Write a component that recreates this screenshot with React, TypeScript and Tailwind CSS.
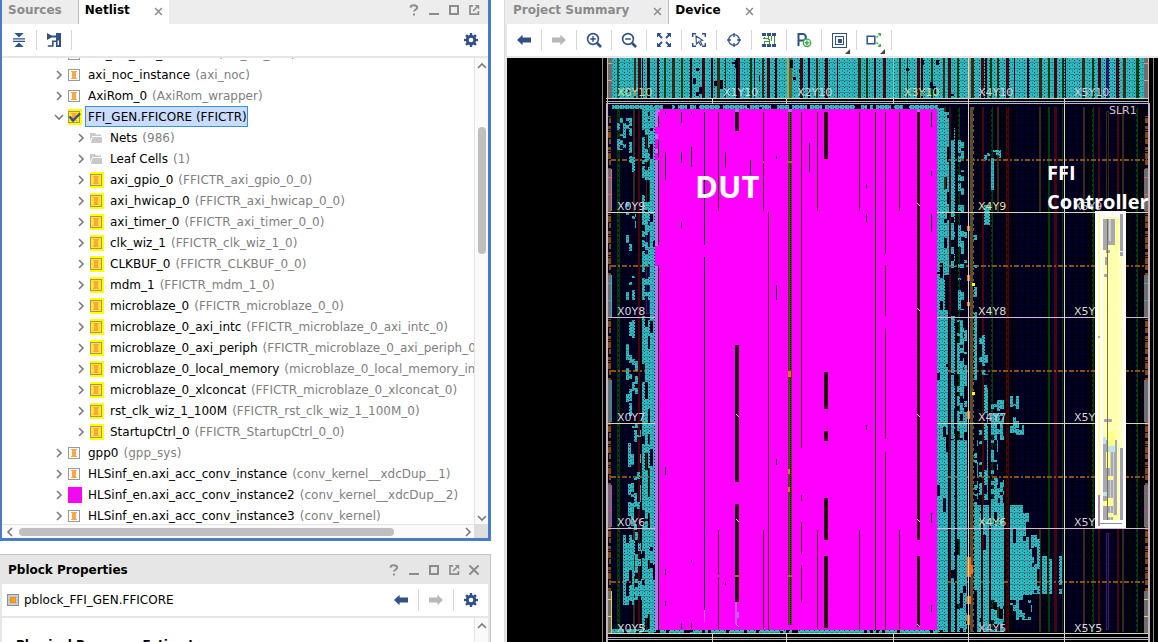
import type { ReactNode } from "react";

/* ---------- icons ---------- */

function HelpIcon() {
  return (
    <svg width="12" height="12" viewBox="0 0 12 12" fill="none" stroke="currentColor" strokeWidth="2">
      <path d="M2.5 3.6C2.6 1.8 4 1.2 5.8 1.2S9.2 2 9.2 3.7 6 5.6 6 7.6M6 9.4v2" />
    </svg>
  );
}
function MinimizeIcon() {
  return (
    <svg width="12" height="12" viewBox="0 0 12 12" shapeRendering="crispEdges">
      <path d="M1 9h10v2H1z" fill="currentColor" />
    </svg>
  );
}
function MaximizeIcon() {
  return (
    <svg width="12" height="12" viewBox="0 0 12 12" fill="none" stroke="currentColor" strokeWidth="2" shapeRendering="crispEdges">
      <path d="M2 2h8v8H2z" />
    </svg>
  );
}
function PopoutIcon() {
  return (
    <svg width="12" height="12" viewBox="0 0 12 12" fill="none" stroke="currentColor">
      <path d="M5 1.8H2v8.4h8.4V7" strokeWidth="1.7" />
      <path d="M5 7l4-4" strokeWidth="1.6" />
      <path d="M6.8 1h4.4v4.4z" fill="currentColor" stroke="none" />
    </svg>
  );
}
function CloseIcon({ size = 10 }: { size?: number }) {
  return (
    <svg width={size} height={size} viewBox="0 0 10 10" fill="none" stroke="currentColor" strokeWidth="1.7">
      <path d="M1.2 1.2l7.6 7.6M8.8 1.2L1.2 8.8" />
    </svg>
  );
}
function GearIcon() {
  return (
    <svg width="14" height="14" viewBox="0 0 14 14">
      <g fill="#2f5088">
        <path d="M5.8 0h2.4v14H5.8z" />
        <path d="M0 5.8h14v2.4H0z" />
        <path d="M5.8 0h2.4v14H5.8z" transform="rotate(45 7 7)" />
        <path d="M5.8 0h2.4v14H5.8z" transform="rotate(-45 7 7)" />
        <circle cx="7" cy="7" r="5.2" />
      </g>
      <circle cx="7" cy="7" r="2.3" fill="#fff" />
    </svg>
  );
}
function ArrowIcon({ right = false }: { right?: boolean }) {
  return (
    <svg width="14" height="12" viewBox="0 0 14 12" fill={right ? "#b8b8b8" : "#2f5088"}>
      <path d={right ? "M14 6L8.4.8V3.6H0v4.8h8.4v2.8z" : "M0 6L5.6.8V3.6H14v4.8H5.6v2.8z"} />
    </svg>
  );
}
function CollapseIcon() {
  return (
    <svg width="12" height="14" viewBox="0 0 12 14" fill="#2f5088">
      <path d="M1.4 0h9.2L6 4.4zM0 5.2h12v1.3H0zM0 7.8h12v1.3H0zM1.4 14h9.2L6 9.6z" />
    </svg>
  );
}
function HierarchyIcon() {
  return (
    <svg width="14" height="14" viewBox="0 0 14 14" fill="#2f5088">
      <path d="M0 0l4.5 2.5H9V0h5v14H9V9H6.6v4.8H.8v-1.6H5V7.4h4V4.6H4.5L0 7z" />
      <path d="M10.6 7.4h1.4v4.6h-1.4z" fill="#fff" />
    </svg>
  );
}
function ZoomIcon({ plus = false }: { plus?: boolean }) {
  return (
    <svg width="16" height="16" viewBox="0 0 16 16" fill="none" stroke="#2f5088">
      <circle cx="7" cy="7" r="5.4" strokeWidth="1.6" />
      <path d="M11 11l4 4" strokeWidth="2.6" />
      <path d={plus ? "M4.2 7h5.6M7 4.2v5.6" : "M4.2 7h5.6"} strokeWidth="1.5" />
    </svg>
  );
}
function FitIcon() {
  return (
    <svg width="14" height="14" viewBox="0 0 14 14" fill="#2f5088" stroke="#2f5088">
      <path stroke="none" d="M0 0h4.6L0 4.6zM14 0v4.6L9.4 0zM0 14V9.4L4.6 14zM14 14H9.4L14 9.4z" />
      <path d="M1 1l4 4M13 1L9 5M1 13l4-4M13 13L9 9" strokeWidth="1.8" />
    </svg>
  );
}
function SelectAreaIcon() {
  return (
    <svg width="14" height="14" viewBox="0 0 14 14" fill="none" stroke="#2f5088" strokeWidth="1.4">
      <path d="M.7 4V.7H4M10 .7h3.3V4M.7 10v3.3H4M10 13.3h3.3V10" />
      <path d="M4 3l6.6 4.4-2.6.7 2 3.4-1.4.8-2-3.4L4.4 11z" strokeWidth="1.1" />
    </svg>
  );
}
function TargetIcon() {
  return (
    <svg width="14" height="14" viewBox="0 0 14 14" fill="none" stroke="#2f5088" strokeWidth="1.3">
      <circle cx="7" cy="7" r="5.4" />
      <path d="M7 0v4M7 10v4M0 7h4M10 7h4" />
    </svg>
  );
}
function RouteIcon() {
  return (
    <svg width="14" height="14" viewBox="0 0 14 14" shapeRendering="crispEdges">
      <path fill="#2f5088" d="M0 0h4v3H0zM5 0h4v3H5zM10 0h4v3h-4zM0 11h4v3H0zM5 11h4v3H5zM10 11h4v3h-4z" />
      <path fill="#3a9a3f" d="M6 3h1v4H6zM2 4h1v1H2zM1 5h5v1H1zM2 8h5v1H2zM7 6h1v6H7zM2 8h1v3H2zM9 3h1v5H9zM12 3h1v8h-1z" />
    </svg>
  );
}
function PblockAddIcon() {
  return (
    <svg width="16" height="16" viewBox="0 0 16 16" fill="none">
      <path d="M2.5 14V2h4.2a3 3 0 010 6.4H2.5" stroke="#2f5088" strokeWidth="2" />
      <circle cx="11" cy="10.8" r="3.7" fill="#fff" stroke="#3fae49" strokeWidth="1.3" />
      <path d="M8.6 10.8h4.8M11 8.4v4.8" stroke="#3fae49" strokeWidth="1.5" />
    </svg>
  );
}
function LayersIcon() {
  return (
    <svg width="15" height="15" viewBox="0 0 15 15" fill="none" stroke="#2f5088" shapeRendering="crispEdges">
      <path d="M.5.5h14v14H.5zM3.5 3.5h8v8h-8z" />
      <path d="M6 6h4v4H6z" fill="#2f5088" stroke="none" />
    </svg>
  );
}
function ExpandIcon() {
  return (
    <svg width="16" height="16" viewBox="0 0 16 16" fill="none">
      <path d="M1.2 4.2h7.6v7.6H1.2z" stroke="#2f5088" strokeWidth="1.5" />
      <path d="M10.5 5.5l3-3M10.5 10.5l3 3" stroke="#3fae49" strokeWidth="1.5" strokeDasharray="2 1" />
      <path d="M11.5 1H15v3.5zM11.5 15H15v-3.5z" fill="#3fae49" />
    </svg>
  );
}
function Chevron({ dir }: { dir: "up" | "down" | "left" | "right" }) {
  const d = {
    up: "M1 7l4-4 4 4",
    down: "M1 3l4 4 4-4",
    left: "M7 1L3 5l4 4",
    right: "M3 1l4 4-4 4",
  }[dir];
  return (
    <svg width="10" height="10" viewBox="0 0 10 10" fill="none" stroke="#7a7a7a" strokeWidth="1.6">
      <path d={d} />
    </svg>
  );
}

type NodeKind = "cell" | "marked" | "checked" | "folder" | "magenta";

function NodeIcon({ kind }: { kind: NodeKind }) {
  if (kind === "folder") {
    return (
      <svg width="14" height="16" viewBox="0 0 14 16">
        <path d="M0 3h5l1 1.5h5V6H2.5L0 11z" fill="#c9c9c9" />
        <path d="M2.6 7H12v6H1z" fill="#c9c9c9" />
      </svg>
    );
  }
  if (kind === "magenta") {
    return (
      <svg width="14" height="16" viewBox="0 0 14 16">
        <path d="M0 0h14v16H0z" fill="#f0f" />
        <path d="M6.5 2.5L12 8l-5.5 5.5L1 8z" fill="none" stroke="#a03ca8" />
      </svg>
    );
  }
  return (
    <svg width="14" height="16" viewBox="0 0 14 16">
      {kind !== "cell" && <path d="M0 0h14v16H0z" fill="#ff0" />}
      <path
        d="M.5 2.5h11v11H.5z"
        fill={kind === "cell" ? "#fff" : "#ffe52a"}
        stroke={kind === "cell" ? "#9a9a9a" : "#a39c50"}
        shapeRendering="crispEdges"
      />
      <path d="M3 4h6v1h-1v6h1v1H3v-1h1V5H3z" fill="#ffa640" shapeRendering="crispEdges" />
      {kind === "checked" && <path d="M1.5 7.5l3.5 4 7-7" fill="none" stroke="#2f5088" strokeWidth="2.4" />}
    </svg>
  );
}

/* ---------- shared controls ---------- */

function ToolButton({ label, menu = false, children }: { label: string; menu?: boolean; children: ReactNode }) {
  return (
    <button
      type="button"
      aria-label={label}
      className="relative flex h-5 w-[35px] shrink-0 items-center justify-center border-r border-[#d6d6d6]"
    >
      {children}
      {menu && (
        <svg className="absolute right-1.5 -bottom-1" width="5" height="5" viewBox="0 0 5 5">
          <path d="M5 0v5H0z" fill="#444" />
        </svg>
      )}
    </button>
  );
}

function WindowButton({ label, children }: { label: string; children: ReactNode }) {
  return (
    <button type="button" aria-label={label} className="flex h-5 w-5 items-center justify-center text-[#8c8c8c]">
      {children}
    </button>
  );
}

function WindowControls({ closable = false }: { closable?: boolean }) {
  return (
    <div className="ml-auto flex items-center pr-1">
      <WindowButton label="Help"><HelpIcon /></WindowButton>
      <WindowButton label="Minimize"><MinimizeIcon /></WindowButton>
      <WindowButton label="Maximize"><MaximizeIcon /></WindowButton>
      <WindowButton label="Float"><PopoutIcon /></WindowButton>
      {closable && <WindowButton label="Close"><CloseIcon size={12} /></WindowButton>}
    </div>
  );
}

function Tab({ title, active = false, closable = true }: { title: string; active?: boolean; closable?: boolean }) {
  return (
    <div className={`flex items-center pb-1 ${active ? "bg-white" : "border-r border-[#bdbdbd]"}`}>
      <button type="button" className={`pl-1.5 whitespace-nowrap ${active ? "text-black" : "text-[#8a8a8a]"} ${closable ? "pr-6" : "pr-4"}`}>
        {title}
      </button>
      {closable && (
        <button type="button" aria-label={`Close ${title}`} className="pt-0.5 pr-1.5 text-[#8c8c8c]">
          <CloseIcon size={9} />
        </button>
      )}
    </div>
  );
}

/* ---------- netlist ---------- */

type Row = { name: string; ref?: string; kind: NodeKind; level: 1 | 2; open?: boolean };

const rows: Row[] = [
  { name: "axi_clk_con_instance", ref: "axi_clk_con", kind: "cell", level: 1 },
  { name: "axi_noc_instance", ref: "axi_noc", kind: "cell", level: 1 },
  { name: "AxiRom_0", ref: "AxiRom_wrapper", kind: "cell", level: 1 },
  { name: "FFI_GEN.FFICORE (FFICTR)", kind: "checked", level: 1, open: true },
  { name: "Nets", ref: "986", kind: "folder", level: 2 },
  { name: "Leaf Cells", ref: "1", kind: "folder", level: 2 },
  { name: "axi_gpio_0", ref: "FFICTR_axi_gpio_0_0", kind: "marked", level: 2 },
  { name: "axi_hwicap_0", ref: "FFICTR_axi_hwicap_0_0", kind: "marked", level: 2 },
  { name: "axi_timer_0", ref: "FFICTR_axi_timer_0_0", kind: "marked", level: 2 },
  { name: "clk_wiz_1", ref: "FFICTR_clk_wiz_1_0", kind: "marked", level: 2 },
  { name: "CLKBUF_0", ref: "FFICTR_CLKBUF_0_0", kind: "marked", level: 2 },
  { name: "mdm_1", ref: "FFICTR_mdm_1_0", kind: "marked", level: 2 },
  { name: "microblaze_0", ref: "FFICTR_microblaze_0_0", kind: "marked", level: 2 },
  { name: "microblaze_0_axi_intc", ref: "FFICTR_microblaze_0_axi_intc_0", kind: "marked", level: 2 },
  { name: "microblaze_0_axi_periph", ref: "FFICTR_microblaze_0_axi_periph_0", kind: "marked", level: 2 },
  { name: "microblaze_0_local_memory", ref: "microblaze_0_local_memory_imp", kind: "marked", level: 2 },
  { name: "microblaze_0_xlconcat", ref: "FFICTR_microblaze_0_xlconcat_0", kind: "marked", level: 2 },
  { name: "rst_clk_wiz_1_100M", ref: "FFICTR_rst_clk_wiz_1_100M_0", kind: "marked", level: 2 },
  { name: "StartupCtrl_0", ref: "FFICTR_StartupCtrl_0_0", kind: "marked", level: 2 },
  { name: "gpp0", ref: "gpp_sys", kind: "cell", level: 1 },
  { name: "HLSinf_en.axi_acc_conv_instance", ref: "conv_kernel__xdcDup__1", kind: "cell", level: 1 },
  { name: "HLSinf_en.axi_acc_conv_instance2", ref: "conv_kernel__xdcDup__2", kind: "magenta", level: 1 },
  { name: "HLSinf_en.axi_acc_conv_instance3", ref: "conv_kernel", kind: "cell", level: 1 },
];

function TreeRow({ row }: { row: Row }) {
  return (
    <li
      role="treeitem"
      aria-expanded={!!row.open}
      className={`flex h-[21px] items-center whitespace-nowrap ${row.level === 1 ? "pl-[52px]" : "pl-[74px]"}`}
    >
      <button type="button" aria-label={`Toggle ${row.name}`} className="mr-1 w-2.5 shrink-0">
        <Chevron dir={row.open ? "down" : "right"} />
      </button>
      <span className="shrink-0"><NodeIcon kind={row.kind} /></span>
      <span
        className={`ml-[3px] flex h-[21px] items-center border pl-0.5 ${
          row.open ? "border-[#3a93d0] bg-[#c9dcfd]" : "border-transparent"
        }`}
      >
        <span className="text-black">{row.name}</span>
        {row.ref && <span className="ml-[5px] text-[#808080]">({row.ref})</span>}
      </span>
    </li>
  );
}

function NetlistPanel() {
  return (
    <section className="flex min-h-0 flex-1 flex-col border-r-[3px] border-b-[3px] border-l-2 border-[#4a7bcb] bg-white">
      <header className="flex h-6 shrink-0 items-stretch bg-[#ededed] font-bold">
        <Tab title="Sources" closable={false} />
        <Tab title="Netlist" active />
        <div className="ml-auto flex pb-1">
          <WindowControls />
        </div>
      </header>
      <div className="flex h-[34px] shrink-0 items-center border-b-2 border-[#e6e6e6]">
        <ToolButton label="Collapse all"><CollapseIcon /></ToolButton>
        <ToolButton label="Show hierarchy"><HierarchyIcon /></ToolButton>
        <button type="button" aria-label="Settings" className="mr-2.5 ml-auto"><GearIcon /></button>
      </div>
      <div className="flex min-h-0 flex-1">
        <div className="min-w-0 flex-1 overflow-hidden">
          <ul role="tree" className="-mt-[15px]">
            {rows.map((row) => <TreeRow key={row.name} row={row} />)}
          </ul>
        </div>
        <div className="flex w-3.5 shrink-0 flex-col items-center border-l border-[#e4e4e4] bg-[#fafafa]">
          <button type="button" aria-label="Scroll up" className="flex h-4 items-center"><Chevron dir="up" /></button>
          <div className="flex w-2 flex-1 flex-col pt-[53px]">
            <div className="h-[127px] rounded-full bg-[#bfbfbf]" />
          </div>
          <button type="button" aria-label="Scroll down" className="flex h-3 items-center"><Chevron dir="down" /></button>
        </div>
      </div>
      <div className="flex h-3.5 shrink-0 bg-[#fafafa]">
        <div className="flex min-w-0 flex-1 items-center border-t border-[#e4e4e4]">
          <button type="button" aria-label="Scroll left" className="w-[17px] pl-[3px]"><Chevron dir="left" /></button>
          <div className="min-w-0 flex-1">
            <div className="h-2 w-[85%] rounded-full bg-[#bfbfbf]" />
          </div>
          <button type="button" aria-label="Scroll right" className="w-3.5 pl-[3px]"><Chevron dir="right" /></button>
        </div>
        <div className="w-3.5 bg-[#dedede]" />
      </div>
    </section>
  );
}

function PropertiesPanel() {
  return (
    <section className="flex h-[88px] shrink-0 flex-col overflow-hidden border-t border-r border-[#c4c4c4] bg-white">
      <header className="flex h-[29px] shrink-0 items-center bg-[#e6e6e6] pr-0.5 pl-2 font-bold">
        <h2>Pblock Properties</h2>
        <WindowControls closable />
      </header>
      <div className="flex h-[58px] flex-col border-x-2 border-[#e6e6e6]">
        <div className="flex h-[34px] shrink-0 items-center border-b-2 border-[#e6e6e6]">
          <svg className="ml-[5px]" width="12" height="12" viewBox="0 0 12 12" shapeRendering="crispEdges">
            <path d="M.5.5h11v11H.5z" fill="#b9cfdf" stroke="#8e8e8e" />
            <path d="M3 3h6v6H3z" fill="#ff8a00" />
            <path d="M4 4h4v4H4z" fill="#ffa51e" />
          </svg>
          <span className="ml-[5px]">pblock_FFI_GEN.FFICORE</span>
          <div className="ml-auto flex items-center">
            <ToolButton label="Back"><ArrowIcon /></ToolButton>
            <ToolButton label="Forward"><ArrowIcon right /></ToolButton>
            <button type="button" aria-label="Settings" className="mr-2.5 ml-2.5"><GearIcon /></button>
          </div>
        </div>
        <div className="flex min-h-0 flex-1">
          <h3 className="flex-1 pt-[18px] pl-3.5 font-bold">Physical Resource Estimates</h3>
          <div className="flex w-3.5 flex-col items-center border-l border-[#e4e4e4] bg-[#fafafa]">
            <button type="button" aria-label="Scroll properties up" className="flex h-4 items-center"><Chevron dir="up" /></button>
          </div>
        </div>
      </div>
    </section>
  );
}

/* ---------- device floorplan ---------- */

let seed = 20;
function rnd() {
  seed = (seed * 1103515245 + 12345) % 2147483648;
  return seed / 2147483648;
}

type Zone = [x0: number, x1: number, y0: number, y1: number, density: number];

// Short vertical runs of placed logic, column by column.
function fillZones(zones: Zone[], step = 3) {
  let d = "";
  for (const [x0, x1, y0, y1, density] of zones) {
    for (let x = x0; x < x1; x += step) {
      let y = y0;
      while (y < y1) {
        const run = 2 + Math.floor(rnd() * (density > 0.7 ? 16 : 7));
        if (rnd() < density) d += `M${x} ${y}h${Math.min(step, x1 - x)}v${Math.min(run, y1 - y)}h-${Math.min(step, x1 - x)}z`;
        y += run;
      }
    }
  }
  return d;
}

const logic = fillZones([
  [612, 938, 105, 109, 0.85],
  [650, 656, 105, 632, 0.9],
  [642, 650, 105, 180, 0.6], [642, 650, 195, 300, 0.6], [642, 650, 316, 632, 0.75],
  [617, 632, 118, 150, 0.55], [626, 636, 150, 300, 0.14], [626, 638, 320, 430, 0.25],
  [628, 641, 430, 530, 0.35], [623, 634, 535, 605, 0.75], [632, 642, 530, 600, 0.45],
  [937, 944, 108, 280, 0.97], [937, 945, 280, 310, 0.75], [937, 948, 310, 632, 0.95],
  [944, 949, 112, 212, 0.85], [944, 949, 212, 275, 0.7],
  [951, 955, 128, 212, 0.8], [951, 955, 212, 268, 0.7], [951, 955, 316, 440, 0.75], [951, 955, 440, 632, 0.93],
  [958, 964, 138, 268, 0.5], [958, 964, 278, 310, 0.2], [957, 964, 320, 440, 0.7], [957, 967, 440, 632, 0.93],
  [964, 967, 230, 265, 0.4], [964, 967, 330, 440, 0.65],
  [984, 1001, 150, 160, 0.4], [991, 994, 158, 190, 0.85], [984, 990, 205, 225, 0.6], [974, 977, 235, 300, 0.25],
  [974, 977, 312, 380, 0.75], [979, 988, 335, 375, 0.25], [984, 988, 385, 440, 0.8],
  [991, 1004, 400, 440, 0.6], [1010, 1019, 396, 433, 0.6], [1016, 1024, 425, 435, 0.6],
  [974, 978, 440, 505, 0.5], [979, 982, 430, 500, 0.5], [984, 988, 423, 500, 0.85],
  [991, 998, 440, 505, 0.4], [991, 1004, 480, 505, 0.5],
  [974, 981, 505, 632, 0.88], [983, 989, 505, 632, 0.93], [991, 1004, 503, 600, 0.93], [991, 1004, 600, 632, 0.6],
  [1010, 1023, 505, 600, 0.93], [1023, 1032, 513, 595, 0.8], [1031, 1040, 535, 594, 0.75],
  [1042, 1047, 556, 594, 0.8], [1049, 1052, 556, 594, 0.7], [1059, 1062, 556, 594, 0.7],
  [1010, 1032, 600, 620, 0.3], [612, 938, 629, 633, 0.75],
]);

const topGaps = fillZones([
  [628, 642, 60, 96, 0.08], [690, 760, 60, 96, 0.07], [790, 800, 60, 80, 0.3], [900, 960, 60, 96, 0.03],
], 3);

const NAVY = "#00001c", RED = "#48040f", BROWN = "#3b2a10", GREEN = "#023c08", BLACK = "#050505";

// Fabric columns in the open rows: x, width, colour.
const fabric: [number, number, string][] = [
  [617, 3, GREEN], [638, 2, RED], [949, 2, RED], [958, 2, GREEN], [982, 2, RED], [991, 2, GREEN],
  [1006, 3, RED], [1048, 2, GREEN], [1054, 3, RED], [1062, 1, GREEN], [1092, 2, GREEN], [1098, 2, RED],
  [1117, 2, RED], [1136, 2, GREEN], [1004, 2, BLACK], [1010, 2, BLACK], [1046, 2, BLACK], [1140, 3, BLACK],
  [956, 1, BLACK], [980, 2, BLACK], [989, 1, BLACK], [1088, 2, BLACK], [1128, 4, BLACK],
];
const outerFabric = [633, 944, 997, 1039, 1083, 1122];

const topColumns: [number, number, string][] = [
  [617, 2, "#0a5b3a"], [634, 2, BROWN], [638, 3, RED], [642, 1, NAVY], [647, 3, BLACK], [657, 2, RED], [664, 2, GREEN],
  [672, 3, BROWN], [681, 2, GREEN], [690, 2, BLACK], [702, 3, RED], [711, 2, NAVY], [717, 3, BROWN], [725, 1, GREEN],
  [736, 4, NAVY], [738, 2, RED], [750, 2, GREEN], [754, 1, NAVY], [762, 2, BROWN], [767, 3, RED], [775, 2, BLACK],
  [787, 2, "#7fb86a"], [789, 3, "#6b5a26"], [800, 3, RED], [808, 2, NAVY], [816, 2, BROWN], [825, 3, RED],
  [837, 1, NAVY], [858, 3, BROWN], [866, 2, GREEN], [874, 2, RED], [883, 3, RED], [893, 1, "#66d8c0"], [899, 2, BROWN],
  [907, 1, GREEN], [917, 3, RED], [921, 2, BLACK], [931, 2, GREEN], [943, 2, BROWN], [948, 3, RED], [957, 2, GREEN],
  [968, 2, "#b09a70"], [971, 3, BROWN], [981, 3, RED], [985, 2, BLACK], [990, 2, GREEN], [997, 2, BROWN], [1006, 3, RED],
  [1014, 1, NAVY], [1027, 2, NAVY], [1039, 3, BROWN], [1048, 2, GREEN], [1054, 3, RED], [1062, 2, GREEN], [1065, 1, NAVY],
  [1082, 3, BROWN], [1092, 2, GREEN], [1098, 3, RED], [1106, 3, "#35106a"], [1116, 3, RED], [1123, 3, BROWN], [1136, 3, GREEN],
];

// Gaps between placed blocks inside the design under test: x, y0, y1, width, colour.
const dutGaps: [number, number, number, number, string][] = [
  [665, 112, 114, 1, GREEN], [665, 152, 180, 1, GREEN], [665, 467, 475, 1, GREEN], [665, 569, 575, 1, GREEN], [665, 601, 606, 1, GREEN],
  [658, 116, 127, 1, BLACK], [658, 140, 158, 1, BLACK], [658, 160, 245, 1, BLACK], [658, 265, 630, 1, BLACK],
  [681, 112, 123, 1, GREEN], [681, 152, 163, 1, GREEN], [681, 222, 228, 1, GREEN], [681, 623, 629, 1, GREEN],
  [691, 112, 114, 1, GREEN], [691, 147, 167, 1, GREEN], [691, 560, 562, 1, GREEN], [691, 623, 629, 1, GREEN],
  [704, 112, 245, 1, NAVY], [704, 257, 610, 1, NAVY],
  [718, 112, 211, 1, BROWN], [718, 530, 629, 1, BROWN], [725, 152, 168, 1, GREEN], [725, 582, 585, 1, BLACK],
  [735, 112, 131, 4, NAVY], [737, 112, 131, 2, RED], [735, 345, 482, 2, NAVY], [737, 345, 482, 2, RED],
  [735, 504, 602, 2, NAVY], [737, 504, 602, 2, RED], [750, 160, 175, 1, GREEN],
  [763, 112, 211, 1, BROWN], [763, 530, 629, 1, BROWN], [768, 212, 630, 1, BROWN],
  [776, 156, 159, 1, GREEN], [776, 285, 300, 1, GREEN], [776, 459, 465, 1, GREEN],
  [788, 112, 370, 4, "#55452a"], [788, 370, 625, 4, "#55452a"],
  [801, 112, 448, 1, BROWN], [801, 495, 501, 1, BROWN], [801, 522, 554, 1, BROWN], [801, 565, 602, 1, BROWN],
  [809, 143, 172, 1, GREEN], [817, 112, 211, 1, BROWN], [817, 530, 629, 1, BROWN],
  [824, 112, 159, 4, "#24060a"], [824, 372, 409, 4, "#24060a"], [824, 431, 441, 4, "#24060a"],
  [824, 498, 540, 4, "#24060a"], [824, 556, 628, 4, "#24060a"],
  [859, 112, 211, 1, BROWN], [859, 530, 629, 1, BROWN], [866, 184, 188, 1, GREEN], [866, 214, 222, 1, GREEN], [866, 425, 430, 1, GREEN],
  [875, 112, 630, 1, BLACK], [885, 112, 254, 1, BROWN], [885, 265, 316, 1, BROWN], [885, 328, 439, 1, BROWN], [885, 452, 630, 1, BROWN],
  [899, 112, 211, 1, BROWN], [899, 530, 629, 1, BROWN],
  [917, 112, 540, 3, "#30040c"], [917, 556, 627, 3, "#30040c"],
  [931, 112, 127, 1, GREEN], [931, 171, 176, 1, GREEN], [931, 214, 232, 1, GREEN], [931, 513, 523, 1, GREEN], [931, 605, 612, 1, GREEN],
];

const rowLines = [212, 317, 423, 528];
const clockLines = [159, 265, 370, 476, 581];
const labels: [number, number, string, string][] = [
  [617, 96, "X0Y10", "#d8dc9a"], [723, 96, "X1Y10", "#c8dcdc"], [797, 96, "X2Y10", "#d0d8dc"],
  [904, 96, "X3Y10", "#d8dc9a"], [978, 96, "X4Y10", "#d8d0d8"], [1074, 96, "X5Y10", "#d8c8dc"],
  [617, 210, "X0Y9", "#dcd0e0"], [617, 315, "X0Y8", "#dcd0e0"], [617, 421, "X0Y7", "#dcd0e0"], [617, 526, "X0Y6", "#dcd0e0"], [617, 632, "X0Y5", "#d8d8d8"],
  [978, 210, "X4Y9", "#dcdcb0"], [978, 315, "X4Y8", "#dcdcc8"], [978, 421, "X4Y7", "#dcc8dc"], [978, 526, "X4Y6", "#dcdcb0"], [978, 632, "X4Y5", "#dcb8dc"],
  [1074, 210, "X5Y9", "#c8c0c8"], [1074, 315, "X5Y8", "#dcdcc8"], [1074, 421, "X5Y7", "#dcd0dc"], [1074, 526, "X5Y6", "#dcc8dc"], [1074, 632, "X5Y5", "#d8d8d8"],
  [1109, 114, "SLR1", "#d0c0d0"],
];

const ioBanks: [number, string][] = [[169, "#e06080"], [275, "#30a8c8"], [380, "#2090a0"], [485, "#c040b0"], [591, "#e8d040"]];

const coreBlocks = fillZones([
  [1103, 1118, 440, 521, 0.16], [1103, 1109, 245, 320, 0.04],
], 5);

function DeviceView() {
  return (
    <svg
      role="img"
      aria-label="Device floorplan"
      viewBox="507 58 651 584"
      preserveAspectRatio="xMinYMin slice"
      shapeRendering="crispEdges"
      className="block h-full w-full bg-black"
    >
      <defs>
        <pattern id="fabric" width="6" height="7" patternUnits="userSpaceOnUse">
          <path d="M0 0h6v7H0z" fill="#00000e" />
          <path d="M0 0h4v6H0z" fill="#00001e" />
          <path d="M0 3h5v1H0zM2 0h1v7H2z" fill="#000034" />
        </pattern>
        <pattern id="logic" width="5" height="6" patternUnits="userSpaceOnUse">
          <path d="M0 0h5v6H0z" fill="#2fb9c0" />
          <path d="M0 2h4v1H0zM2 4h1v2H2z" fill="#1f8c96" />
          <path d="M4 0h1v1H4zM4 3h1v1H4z" fill="#04283c" />
        </pattern>
        <pattern id="io" width="4" height="21" patternUnits="userSpaceOnUse">
          <path d="M0 0h4v3H0zM0 4h4v1H0zM0 6h4v6H0zM1 13h3v5H1z" fill="#824a0c" />
        </pattern>
      </defs>

      <path d="M507 58h651v584H507z" fill="#000" />
      <path d="M602 58h1v584h-1zM1153 58h1v584h-1z" fill="#8c8c8c" />
      <path d="M608 104h540v529H608z" fill="url(#fabric)" />
      <path d="M608 98h540v7H608z" fill={NAVY} />

      {fabric.map(([x, w, c]) => <rect key={x} x={x} y={107} width={w} height={525} fill={c} />)}
      {outerFabric.map((x) => (
        <path key={x} d={`M${x} 107h2v105h-2zM${x} 528h2v104h-2z`} fill={BROWN} />
      ))}
      <path d="M646.5 111v97h3v-97zM646.5 428v96h3v-96zM646.5 533v96h3v-96zM1106.5 111v97h2v-97z" fill="none" stroke={BROWN} />
      <path d="M646.5 217v96h3v-96zM1106.5 533v96h2v-96z" fill="none" stroke="#4a1080" />
      <path d="M618.5 107v525M958.5 107v525M991.5 107v525M1092.5 107v525M1136.5 107v525" stroke="#000" strokeDasharray="2 3" />
      <path d="M1007.5 107v525" stroke="#100" strokeDasharray="3 3" />

      {clockLines.map((y) => (
        <path key={y} d={`M611 ${y}.5H655M937 ${y}.5h210`} stroke="#8a5210" strokeWidth="2" strokeDasharray="5 2 2 2" />
      ))}

      <path d={logic} fill="url(#logic)" />
      <path d="M970 107h3v525h-3z" fill="#5c4c28" />
      <path d="M973.5 107v525" stroke="#8a5a20" strokeDasharray="3 4 2 2" />
      <path d="M967 226h3v5h-3zM967 275h3v6h-3zM967 302h3v4h-3zM967 411h3v8h-3zM967 557h4v20h-4zM970 565h3v9h-3zM967 596h4v8h-4zM967 615h3v10h-3z" fill="#f07010" />
      <path d="M972 283h3v3h-3zM972 392h3v3h-3z" fill="#ff0" />

      {/* row above the die boundary */}
      <path d="M608 58h540v40H608z" fill="url(#logic)" />
      {topColumns.map(([x, w, c]) => <rect key={x} x={x} y={58} width={w} height={40} fill={c} />)}
      <path d={topGaps} fill={NAVY} />
      <path d="M608 58h4v40h-4zM1144 58h4v40h-4z" fill="#6e6e6e" />
      <path d="M608 63.5h4M608 80.5h4M1144 63.5h4M1144 80.5h4" stroke="#d8a080" />

      {/* i/o columns */}
      <path d="M608 116h3v517h-3zM1145 116h3v517h-3z" fill="url(#io)" />
      {ioBanks.map(([y, c]) => (
        <g key={y}>
          <path d={`M608 ${y}h4v42h-4zM1144 ${y}h4v42h-4z`} fill="#6e6e6e" />
          <path d={`M608 ${y + 8}.5h4M608 ${y + 25}.5h4M611.5 ${y}v42M1144 ${y + 8}.5h4M1144 ${y + 25}.5h4`} stroke={c} />
        </g>
      ))}

      {/* region boundaries */}
      {rowLines.map((y, i) => (
        <path key={y} d={`M608 ${y}.5h540`} stroke={i % 2 ? "#d8b8d8" : "#d8d8b8"} />
      ))}
      <path d="M606 98.5h543M606 633.5h543" stroke="#d8d8a8" />
      <path d="M606 101.5h543M606 103.5h543M606 637.5h543M606 639.5h543" stroke="#b8b8c0" />
      <path d="M968.5 58v584M1064.5 98v544" stroke="#d8d8c8" />
      <path d="M712.5 98v6M786.5 98v6M893.5 98v6M712.5 633v9M786.5 633v9M893.5 633v9" stroke="#d8d8a8" />
      <path d="M606 103h2v539h-2zM1148 103h2v539h-2z" fill="#c8b4c4" />
      <path d="M607 58h1v45h-1zM1148 58h1v45h-1z" fill="#d8b8a0" />

      <g fontFamily="'DejaVu Sans', sans-serif" fontSize="11">
        {labels.map(([x, y, t, c]) => <text key={t} x={x} y={y} fill={c}>{t}</text>)}
      </g>

      {/* design under test */}
      <path d="M655 112h4v518h-4z" fill="#c070f0" />
      <path d="M658 109h279v521H658zM655 127h3v7h-3zM655 139h3v10h-3zM655 153h3v7h-3zM655 246h3v20h-3z" fill="#f0f" />
      {dutGaps.map(([x, y0, y1, w, c], i) => (
        <rect key={i} x={x} y={y0} width={w} height={y1 - y0} fill={c} />
      ))}
      <path d="M790.5 112v258M790.5 378v247" stroke="#101030" strokeDasharray="1 1" />
      <path d="M825.5 114v45M825.5 374v35M825.5 500v40M825.5 558v68M918.5 114v426M918.5 558v68" stroke="#000" strokeDasharray="3 2" />
      <path d="M656 109h4v3h-4zM735 109h4v3h-4zM788 109h4v3h-4zM917 109h3v3h-3zM735 602h2v22h-2zM737 612h2v6h-2zM704 610h1v12h-1z" fill="#c060ff" />
      <path d="M788 161h4v2h-4zM788 575h4v2h-4zM735 575h4v2h-4zM718 575h1v2h-1zM763 161h1v2h-1z" fill="#8a8000" />
      <path d="M788 371h3v6h-3zM788 469h2v5h-2zM788 487h2v5h-2z" fill="#f07010" />
      <path d="M736 414l3 3M736 519l3 3M736 624l3 3M917 203l3 3M917 308l3 3M917 414l3 3M917 519l3 3M917 624l3 3" stroke="#e8dce8" />

      {/* controller block */}
      <path d="M1095 211h31v317h-31z" fill="#fff" />
      <path d="M1098 214h2v281h-2z" fill="#ffff99" />
      <path d="M1098 495h2v31h-2z" fill="#b08a94" />
      <path d="M1103 217h16v303h-16z" fill="#ffffb0" />
      <path d="M1103 219h12v26h-12zM1103 245h4v5h-4zM1103 440h14v80h-14z" fill="#a8a8b0" />
      <path d="M1106 250h4v3h-4zM1105 257h2v8h-2zM1104 274h3v3h-3zM1098 336h2v2h-2zM1120 342h3v5h-3zM1104 419h8v3h-8z" fill="#a8a8b8" />
      <path d="M1109 219h2v22h-2zM1110 440h1v80h-1zM1113 440h1v80h-1z" fill="#cfcfd4" />
      <path d={coreBlocks} fill="#ffff8c" />
      <path d="M1108 432h7v16h-7zM1106 452h4v16h-4zM1108 476h5v4h-5zM1103 501h4v5h-4zM1108 498h5v8h-5zM1116 219h2v32h-2z" fill="#ffff8c" />
      <path d="M1108 446h7v6h-7zM1103 437h3v7h-3zM1103 492h4v4h-4z" fill="#bfe4ea" />
      <path d="M1119 219h4v301h-4z" fill="#ffffc8" />
      <path d="M1120 214h3v37h-3zM1120 252h3v4h-3zM1120 448h3v72h-3z" fill="#a0a0b4" />
      <path d="M1107 219h1v301h-1z" fill="#77734e" />
      <path d="M1101 520h18v3h-18z" fill="#fff" />
      <path d="M1100 523h22v1h-22z" fill="#8c8ca0" />

      <g fontFamily="'Open Sans', 'Noto Sans', sans-serif" fontWeight="700" fill="#fff">
        <text x="695" y="198" fontSize="31">DUT</text>
        <text x="1047" y="180" fontSize="20">FFI</text>
        <text x="1047" y="209" fontSize="20">Controller</text>
      </g>
    </svg>
  );
}

function DevicePanel() {
  return (
    <main className="flex min-h-0 min-w-0 flex-col border-l border-[#dcdcdc] bg-white">
      <header className="flex h-6 shrink-0 items-stretch border-l-2 border-[#ededed] bg-[#ededed] font-bold">
        <Tab title="Project Summary" />
        <Tab title="Device" active />
      </header>
      <div className="flex h-[34px] shrink-0 items-center border-b-2 border-l-2 border-[#e6e6e6]">
        <ToolButton label="Back"><ArrowIcon /></ToolButton>
        <ToolButton label="Forward"><ArrowIcon right /></ToolButton>
        <ToolButton label="Zoom in"><ZoomIcon plus /></ToolButton>
        <ToolButton label="Zoom out"><ZoomIcon /></ToolButton>
        <ToolButton label="Zoom fit"><FitIcon /></ToolButton>
        <ToolButton label="Select area"><SelectAreaIcon /></ToolButton>
        <ToolButton label="Autofit selection"><TargetIcon /></ToolButton>
        <ToolButton label="Routing resources"><RouteIcon /></ToolButton>
        <ToolButton label="Draw Pblock"><PblockAddIcon /></ToolButton>
        <ToolButton label="Cell drawing" menu><LayersIcon /></ToolButton>
        <ToolButton label="Show connections" menu><ExpandIcon /></ToolButton>
      </div>
      <div className="min-h-0 flex-1 border-l-2 border-[#e6e6e6]">
        <DeviceView />
      </div>
    </main>
  );
}

export default function App() {
  return (
    <div className="grid h-screen w-full grid-cols-[491fr_654fr] gap-[13px] overflow-hidden bg-white font-['DejaVu_Sans',sans-serif] text-[12px] leading-[18px] text-black">
      <div className="flex min-h-0 min-w-0 flex-col gap-[13px]">
        <NetlistPanel />
        <PropertiesPanel />
      </div>
      <DevicePanel />
    </div>
  );
}
